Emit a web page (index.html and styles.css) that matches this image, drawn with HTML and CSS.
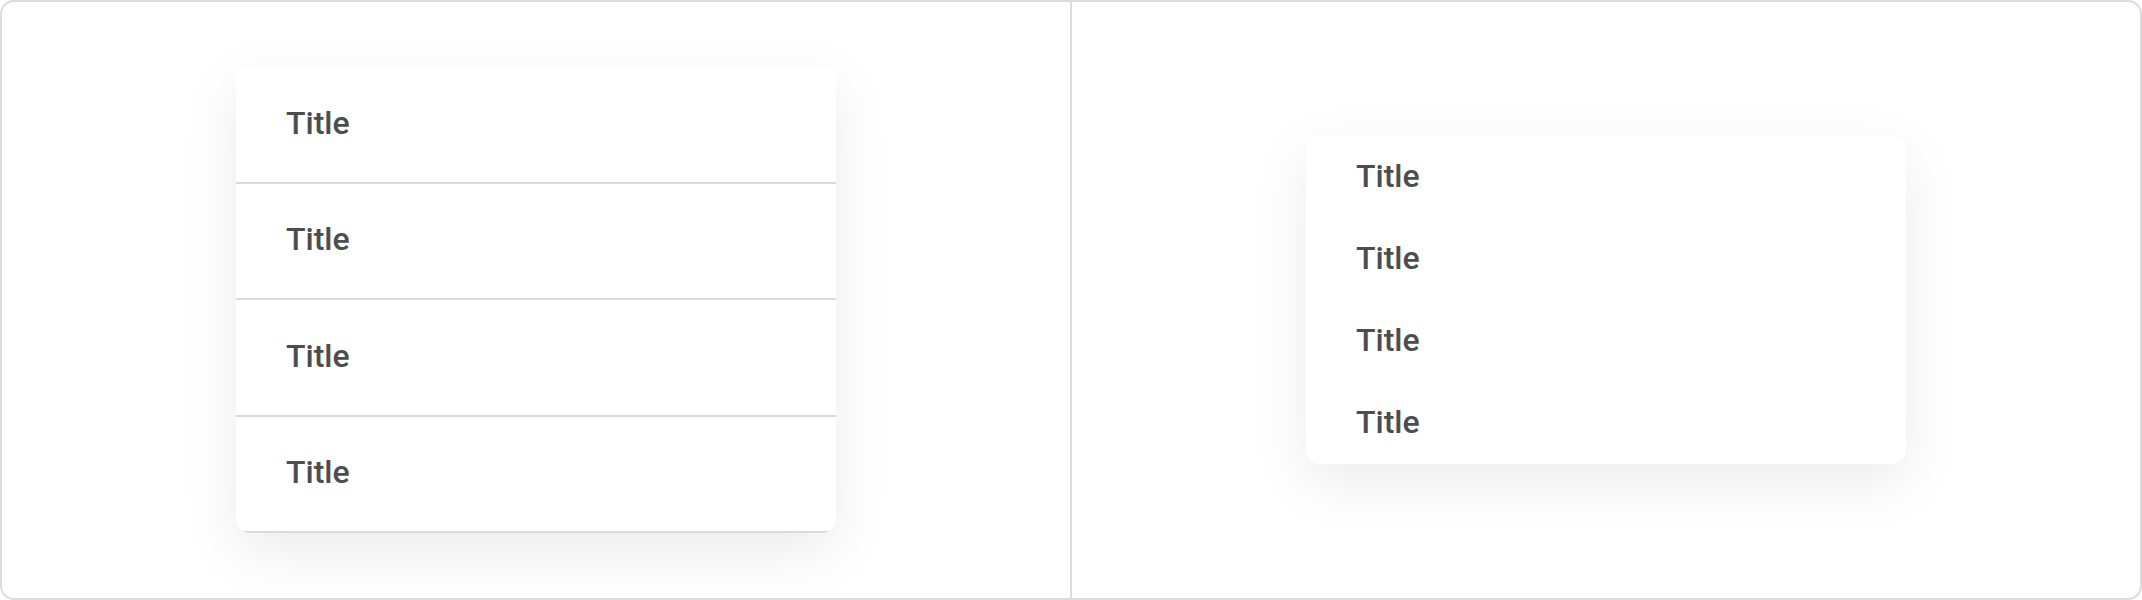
FILE: index.html
```html
<!DOCTYPE html>
<html lang="en">
<head>
  <meta charset="UTF-8" />
  <meta name="viewport" content="width=device-width, initial-scale=1.0"/>
  <title>Lists</title>
  <link rel="stylesheet" href="styles.css">
</head>
<body>
  <div class="frame">
    <div class="panel">
      <ul class="list divided">
        <li>Title</li>
        <li>Title</li>
        <li>Title</li>
        <li>Title</li>
      </ul>
    </div>

    <div class="panel">
      <ul class="list compact">
        <li>Title</li>
        <li>Title</li>
        <li>Title</li>
        <li>Title</li>
      </ul>
    </div>
  </div>
</body>
</html>
```

FILE: styles.css
```css
* {
  box-sizing: border-box;
  margin: 0;
  padding: 0;
}

body {
  font-family: Roboto, 'Noto Sans', sans-serif;
  background-color: white;
  width: 2142px;
  height: 600px;
  overflow: hidden;
}

.frame {
  display: flex;
  width: 2142px;
  height: 600px;
  border: 2px solid #dcdcdc;
  border-radius: 14px;
  overflow: hidden;
}

.panel {
  flex: 1;
  display: flex;
  justify-content: center;
  align-items: center;
}

.panel + .panel {
  border-left: 2px solid #dcdcdc;
}

.list {
  list-style: none;
  width: 600px;
  background-color: white;
  border-radius: 14px;
  overflow: hidden;
  box-shadow: 0 18px 60px rgba(0, 0, 0, 0.08);
}

.list li {
  display: flex;
  align-items: center;
  padding-left: 50px;
  padding-bottom: 3px;
  font-size: 32px;
  font-weight: 500;
  color: #4d4d4d;
}

.divided li {
  height: 116.5px;
  border-bottom: 2px solid #d9d9d9;
}

.compact li {
  height: 82px;
}
```
